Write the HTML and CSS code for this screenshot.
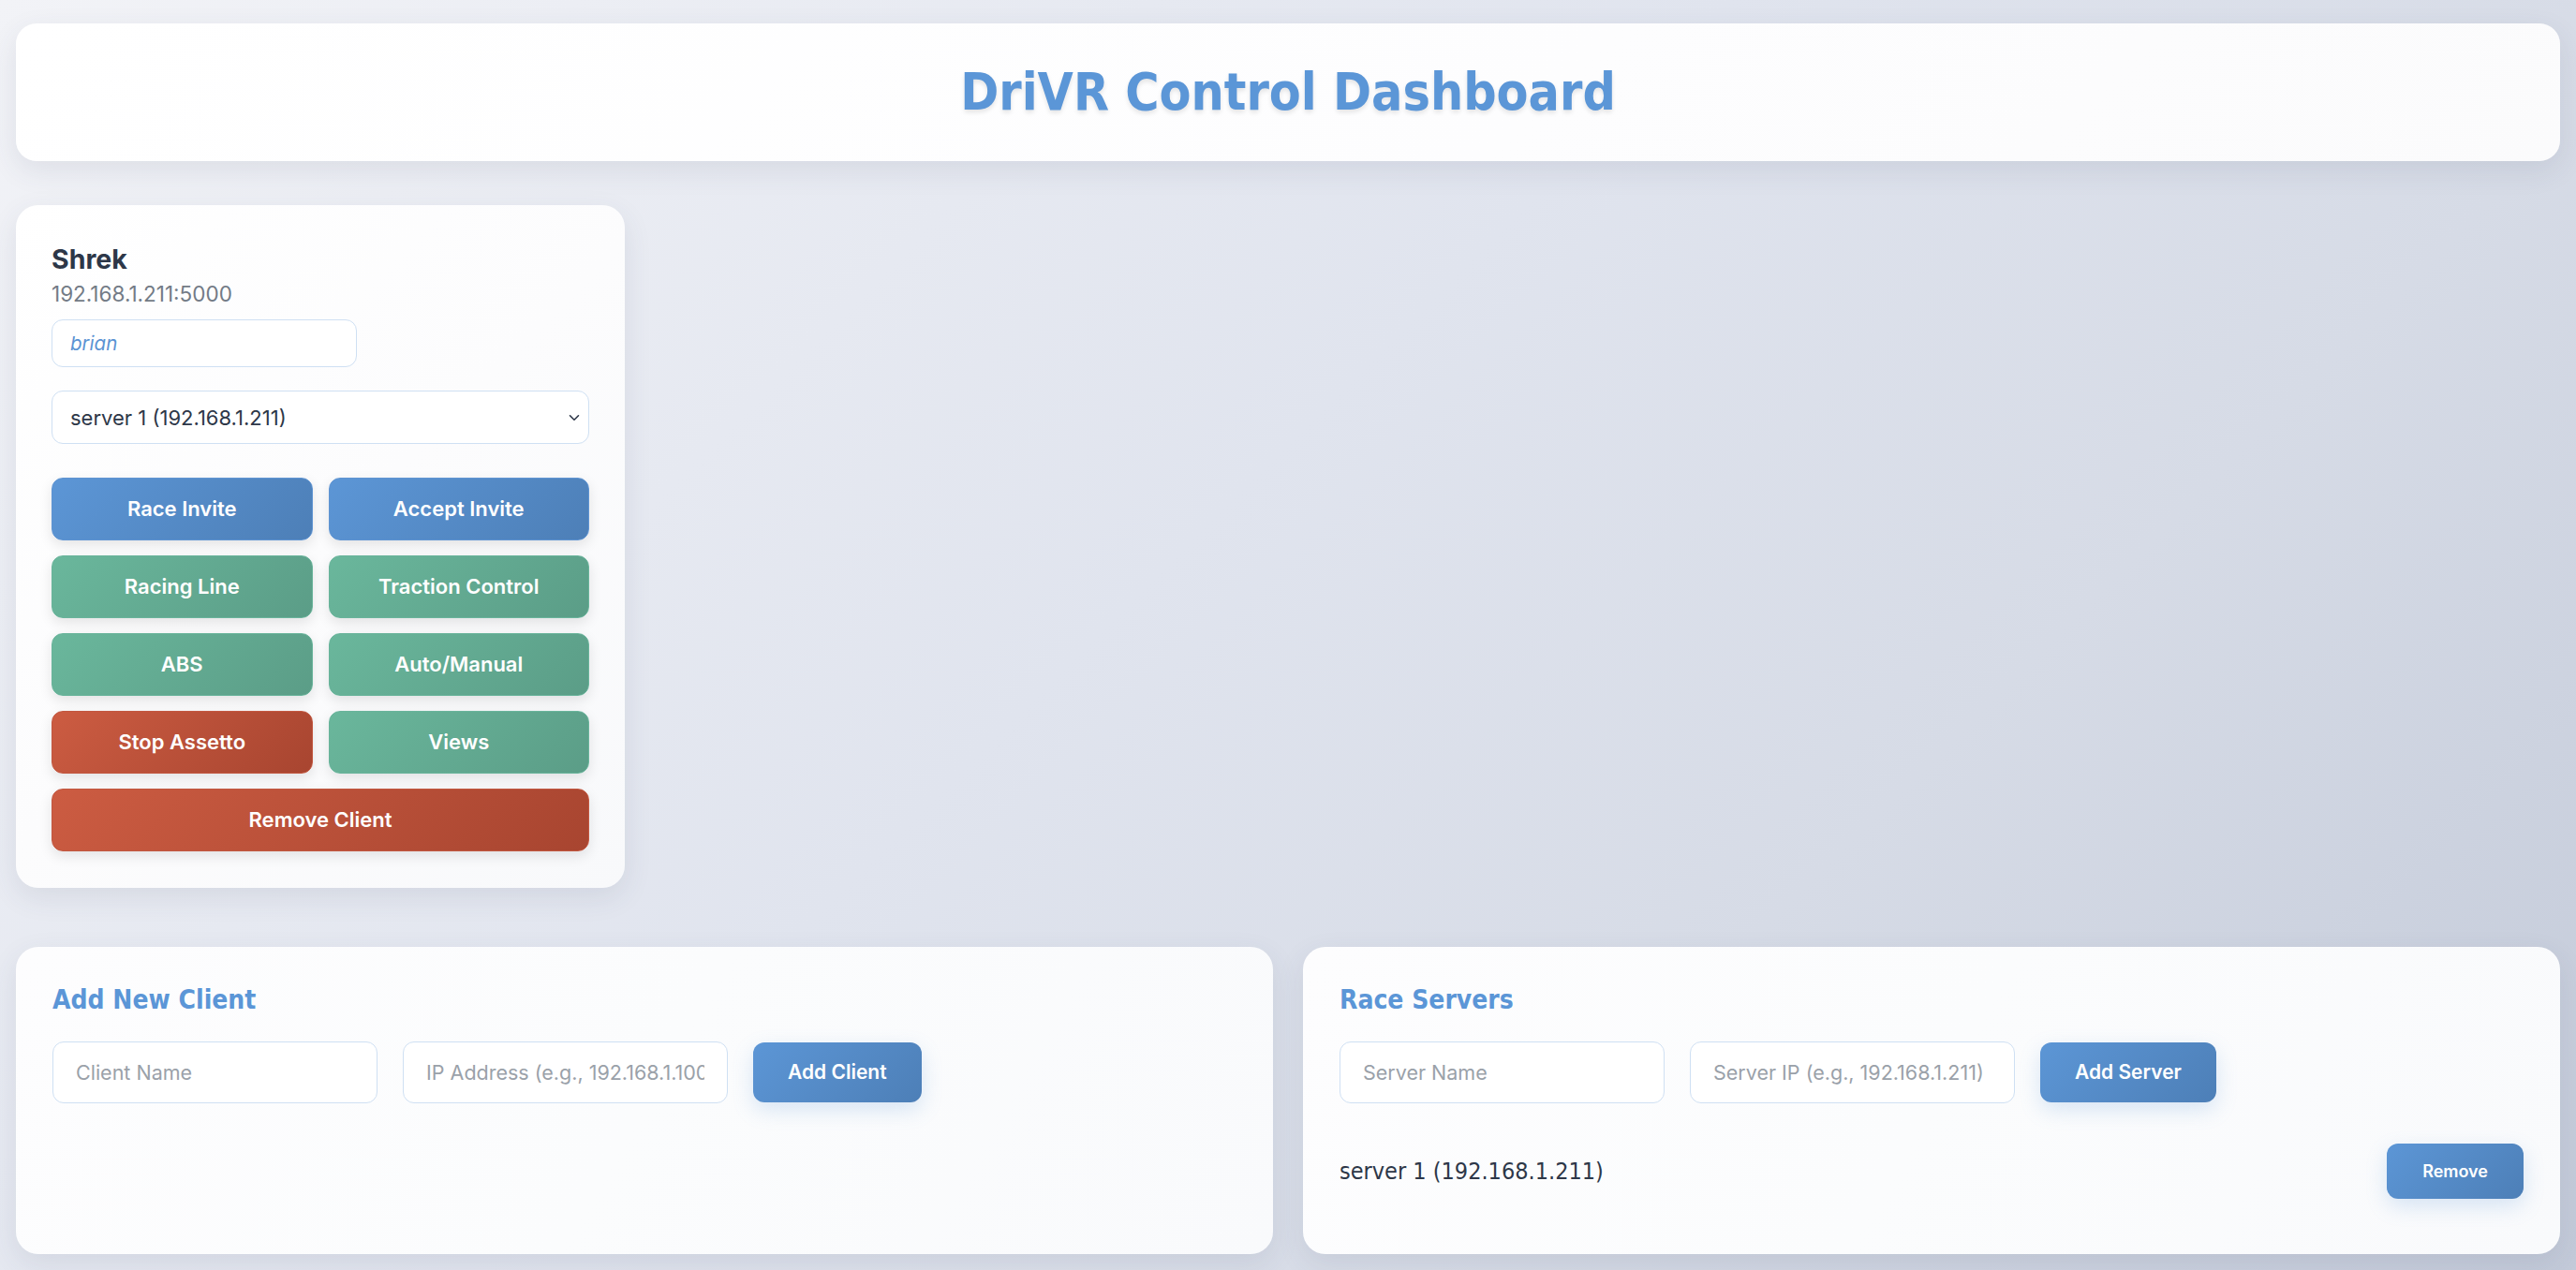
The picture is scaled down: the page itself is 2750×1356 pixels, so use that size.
FILE: index.html
```html
<!DOCTYPE html>
<html lang="en">
<head>
<meta charset="utf-8">
<title>DriVR Control Dashboard</title>
<link rel="stylesheet" href="styles.css">
</head>
<body>
<div class="page">
  <header class="header-card">
    <h1 class="title">DriVR Control Dashboard</h1>
  </header>

  <section class="clients">
    <div class="client-card">
      <h3 class="client-name">Shrek</h3>
      <div class="client-ip">192.168.1.211:5000</div>
      <input class="user-input" type="text" value="brian">
      <div class="select-wrap">
        <select class="server-select">
          <option>server 1 (192.168.1.211)</option>
        </select>
        <svg class="chev" width="12" height="8" viewBox="0 0 12 8"><path d="M1.5 1.8 L6 6.2 L10.5 1.8" fill="none" stroke="#2d3748" stroke-width="1.6" stroke-linecap="round" stroke-linejoin="round"/></svg>
      </div>
      <div class="btn-grid">
        <button class="btn blue">Race Invite</button>
        <button class="btn blue">Accept Invite</button>
        <button class="btn green">Racing Line</button>
        <button class="btn green">Traction Control</button>
        <button class="btn green">ABS</button>
        <button class="btn green">Auto/Manual</button>
        <button class="btn red">Stop Assetto</button>
        <button class="btn green">Views</button>
        <button class="btn red wide">Remove Client</button>
      </div>
    </div>
  </section>

  <section class="bottom">
    <div class="panel">
      <h2 class="panel-title">Add New Client</h2>
      <div class="form-row">
        <input class="field" type="text" placeholder="Client Name">
        <input class="field" type="text" placeholder="IP Address (e.g., 192.168.1.100)">
        <button class="action">Add Client</button>
      </div>
    </div>
    <div class="panel">
      <h2 class="panel-title">Race Servers</h2>
      <div class="form-row">
        <input class="field" type="text" placeholder="Server Name">
        <input class="field" type="text" placeholder="Server IP (e.g., 192.168.1.211)">
        <button class="action">Add Server</button>
      </div>
      <div class="server-list">
        <div class="server-item">
          <span class="server-label">server 1 (192.168.1.211)</span>
          <button class="action small">Remove</button>
        </div>
      </div>
    </div>
  </section>
</div>
</body>
</html>
```

FILE: styles.css
```css
* { box-sizing: border-box; }

html, body {
  margin: 0;
  padding: 0;
}

body {
  min-height: 100vh;
  background: linear-gradient(135deg, #f2f3f7 0%, #e0e4ee 45%, #d6dbe6 70%, #c3cad9 100%);
  font-family: Inter, "Noto Sans", sans-serif;
  color: #2d3748;
}

.page {
  padding: 25px 17px 18px 17px;
  display: flex;
  flex-direction: column;
}

.header-card {
  height: 147px;
  border-radius: 22px;
  background: linear-gradient(135deg, #ffffff 0%, #fdfdfe 60%, #fbfbfc 100%);
  box-shadow: 0 10px 30px rgba(60, 72, 100, 0.10);
  display: flex;
  align-items: center;
  justify-content: center;
}

.title {
  margin: 0;
  font-family: "DejaVu Sans Condensed", "DejaVu Sans", sans-serif;
  font-stretch: condensed;
  font-weight: bold;
  font-size: 55px;
  line-height: 1;
  color: #5b96d7;
  text-shadow: 0 3px 5px rgba(0, 0, 0, 0.10);
}

.clients {
  margin-top: 47px;
  display: flex;
}

.client-card {
  width: 650px;
  border-radius: 24px;
  padding: 41px 38px 39px 38px;
  background: linear-gradient(135deg, #ffffff 0%, #fcfcfd 50%, #f8f9fb 100%);
  box-shadow: 0 10px 30px rgba(60, 72, 100, 0.10);
  display: flex;
  flex-direction: column;
  align-items: flex-start;
}

.client-name {
  margin: 0;
  font-size: 28.5px;
  line-height: 34px;
  font-weight: 700;
  color: #2d3748;
}

.client-ip {
  margin-top: 7px;
  font-size: 22.5px;
  line-height: 26px;
  color: #737b86;
}

.user-input {
  margin-top: 14px;
  width: 326px;
  height: 51px;
  border: 1.5px solid #cfe0f3;
  border-radius: 12px;
  background: #ffffff;
  padding: 0 19px;
  font-family: Inter, sans-serif;
  font-style: italic;
  font-size: 20.5px;
  color: #5b93d3;
  outline: none;
}

.select-wrap {
  margin-top: 25px;
  width: 100%;
  position: relative;
}

.server-select {
  width: 100%;
  height: 57px;
  border: 1.5px solid #cfe0f3;
  border-radius: 12px;
  background: #ffffff;
  padding: 0 19px;
  font-family: Inter, sans-serif;
  font-size: 22px;
  color: #2d3748;
  appearance: none;
  -webkit-appearance: none;
  outline: none;
}

.chev {
  position: absolute;
  right: 10px;
  top: 25px;
  pointer-events: none;
}

.btn-grid {
  margin-top: 36px;
  width: 100%;
  display: grid;
  grid-template-columns: 1fr 1fr;
  grid-auto-rows: 66.5px;
  column-gap: 17px;
  row-gap: 16.5px;
}

.btn {
  border-radius: 12px;
  font-family: Inter, sans-serif;
  font-size: 22px;
  font-weight: 600;
  color: #ffffff;
  cursor: pointer;
  box-shadow: 0 5px 14px rgba(0, 0, 0, 0.10);
}

.btn.blue {
  background: linear-gradient(135deg, #5c96d6 0%, #4d7fb7 100%);
  border: 1.5px solid #5f94d2;
}

.btn.green {
  background: linear-gradient(135deg, #6ab79c 0%, #5b9d87 100%);
  border: 1.5px solid #69b49b;
}

.btn.red {
  background: linear-gradient(135deg, #cc5c42 0%, #a84530 100%);
  border: 1.5px solid #c25740;
}

.btn.wide {
  grid-column: 1 / span 2;
}

.bottom {
  margin-top: 63px;
  display: grid;
  grid-template-columns: 1fr 1fr;
  column-gap: 32px;
}

.panel {
  border-radius: 24px;
  padding: 40px 39px 0 39px;
  background: linear-gradient(120deg, #fdfdfe 0%, #fbfcfd 50%, #f9fafc 100%);
  box-shadow: 0 10px 30px rgba(60, 72, 100, 0.10);
}

.panel-title {
  margin: 0;
  font-family: "DejaVu Sans Condensed", "DejaVu Sans", sans-serif;
  font-stretch: condensed;
  font-weight: bold;
  font-size: 28px;
  line-height: 34px;
  color: #5b96d7;
}

.form-row {
  margin-top: 27px;
  display: flex;
  align-items: center;
  gap: 27px;
}

.field {
  width: 347px;
  height: 66px;
  border: 1.5px solid #cfe0f3;
  border-radius: 12px;
  background: #ffffff;
  padding: 0 24px;
  font-family: Inter, sans-serif;
  font-size: 21.5px;
  color: #2d3748;
  outline: none;
}

.field::placeholder {
  color: #9aa1a9;
}

.action {
  height: 64px;
  padding: 0 37px;
  border: none;
  border-radius: 12px;
  background: linear-gradient(135deg, #5c96d6 0%, #4d7fb7 100%);
  color: #ffffff;
  font-family: Inter, sans-serif;
  font-size: 21px;
  font-weight: 600;
  box-shadow: 0 8px 22px rgba(91, 149, 213, 0.22);
  cursor: pointer;
}

.action.small {
  height: 59px;
  padding: 0 38px;
  font-size: 18px;
}

.server-list {
  margin: 43px 0 59px 0;
}

.server-item {
  display: flex;
  align-items: center;
  justify-content: space-between;
}

.server-label {
  font-family: "DejaVu Sans Condensed", "DejaVu Sans", sans-serif;
  font-stretch: condensed;
  font-size: 25px;
  color: #2d3748;
}
```
